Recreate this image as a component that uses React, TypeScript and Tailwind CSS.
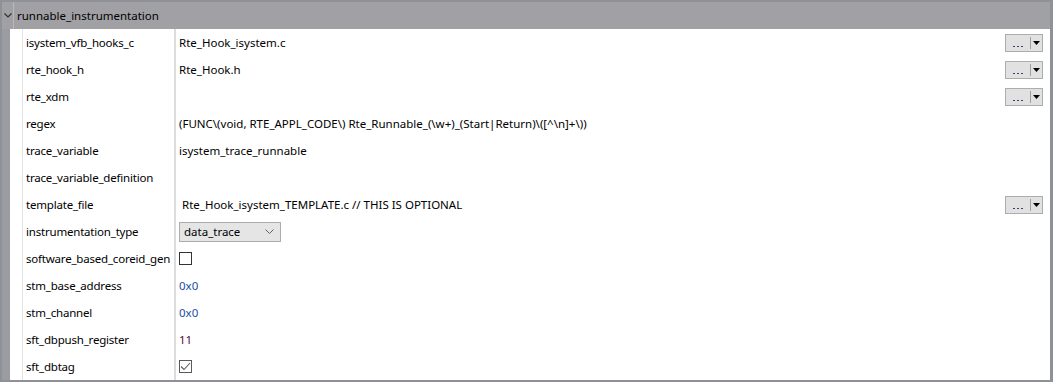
import React from "react";

type Row = {
  label: string;
  value?: string;
  kind?: "text" | "btn" | "select" | "check" | "checked";
  color?: string;
};

const rows: Row[] = [
  { label: "isystem_vfb_hooks_c", value: "Rte_Hook_isystem.c", kind: "btn" },
  { label: "rte_hook_h", value: "Rte_Hook.h", kind: "btn" },
  { label: "rte_xdm", value: "", kind: "btn" },
  { label: "regex", value: "(FUNC\\(void, RTE_APPL_CODE\\) Rte_Runnable_(\\w+)_(Start|Return)\\([^\\n]+\\))" },
  { label: "trace_variable", value: "isystem_trace_runnable" },
  { label: "trace_variable_definition", value: "" },
  { label: "template_file", value: "\u00a0Rte_Hook_isystem_TEMPLATE.c // THIS IS OPTIONAL", kind: "btn" },
  { label: "instrumentation_type", kind: "select" },
  { label: "software_based_coreid_gen", kind: "check" },
  { label: "stm_base_address", value: "0x0", color: "text-[#1c4fa8]" },
  { label: "stm_channel", value: "0x0", color: "text-[#1c4fa8]" },
  { label: "sft_dbpush_register", value: "11", color: "text-[#4e0b38]" },
  { label: "sft_dbtag", kind: "checked" },
];

function DotsButton() {
  return (
    <div className="flex h-[18px] w-[38px] border border-[#adadad] bg-[#e1e1e1]">
      <div className="flex w-[24px] items-end justify-center pb-[4px]">
        <span className="flex gap-[2px]">
          <span className="h-[1px] w-[2px] bg-[#3a3a8a]" />
          <span className="h-[1px] w-[2px] bg-[#8a2a3a]" />
          <span className="h-[1px] w-[2px] bg-[#3a3a8a]" />
        </span>
      </div>
      <div className="my-[2px] w-[1px] bg-[#a0a0a0]" />
      <div className="flex flex-1 items-center justify-center">
        <svg width="7" height="4" viewBox="0 0 7 4">
          <path d="M0 0 H7 L3.5 4 Z" fill="#000" />
        </svg>
      </div>
    </div>
  );
}

function Select() {
  return (
    <div className="flex h-[20px] w-[102px] items-center justify-between border border-[#acacac] bg-[#e5e5e5] pl-[4px] pr-[6px]">
      <span className="text-[11.5px] text-black">data_trace</span>
      <svg width="9" height="5" viewBox="0 0 9 5">
        <path d="M0.5 0.5 L4.5 4.5 L8.5 0.5" fill="none" stroke="#606060" strokeWidth="1" />
      </svg>
    </div>
  );
}

function Check({ checked }: { checked?: boolean }) {
  return (
    <div
      className={
        "flex h-[13px] w-[13px] items-center justify-center border bg-white " +
        (checked ? "border-[#5a5a5a]" : "border-[#333333]")
      }
    >
      {checked && (
        <svg width="11" height="9" viewBox="0 0 11 9">
          <path d="M1 4.5 L4 7.5 L10 1" fill="none" stroke="#5a5a5a" strokeWidth="1.1" />
        </svg>
      )}
    </div>
  );
}

export default function App() {
  return (
    <div
      className="flex h-[382px] w-[1053px] flex-col bg-[#8e9198] pb-[2px] pl-[2px] pr-[3px] pt-[2px]"
      style={{ fontFamily: '"Noto Sans", "Open Sans", Arial, sans-serif' }}
    >
      <div className="flex h-[27px] items-center bg-[#a1a1a5]">
        <div className="flex h-full w-[11px] items-center justify-center">
          <svg width="8" height="5" viewBox="0 0 8 5">
            <path d="M0.5 0.5 L4 4 L7.5 0.5" fill="none" stroke="#303030" strokeWidth="1.2" />
          </svg>
        </div>
        <div className="h-full w-[1px] bg-[#b9b9bd]" />
        <span className="pl-[3px] text-[11.5px] text-black">runnable_instrumentation</span>
      </div>
      <div className="flex flex-1">
        <div className="w-[8px] bg-[#9a9ca2]" />
        <div className="flex flex-1 flex-col bg-white">
          {rows.map((r, i) => (
            <div key={i} className="flex h-[27px]">
              <div className="w-[13px] border-r border-[#e3e3e3]" />
              <div className="flex w-[151px] items-center pl-[3px] text-[11.5px] tracking-[-0.2px] text-black whitespace-nowrap overflow-hidden">
                {r.label}
              </div>
              <div className="w-[2px] bg-[#dcdcdc]" />
              <div className="flex flex-1 items-center pl-[3px] pr-[7px] text-[11.5px] text-black whitespace-nowrap">
                {r.kind === "select" ? (
                  <Select />
                ) : r.kind === "check" ? (
                  <Check />
                ) : r.kind === "checked" ? (
                  <Check checked />
                ) : (
                  <span className={"flex-1 " + (r.color ?? "")}>{r.value}</span>
                )}
                {r.kind === "btn" && <DotsButton />}
              </div>
            </div>
          ))}
        </div>
      </div>
    </div>
  );
}
